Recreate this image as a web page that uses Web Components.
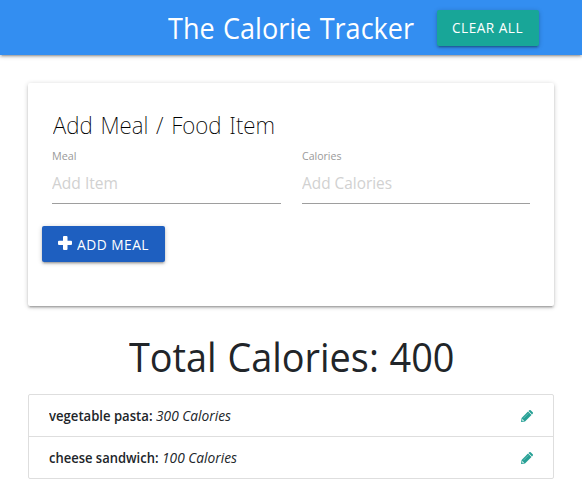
<!DOCTYPE html>
<html lang="en"><head><meta charset="utf-8"><title>The Calorie Tracker</title>
<style>
html,body{margin:0;height:100%;background:#fff;overflow:hidden}
body{font-family:"Open Sans","Noto Sans",sans-serif;color:#212529}
</style></head><body>
<calorie-app></calorie-app>
<script>
// Text line whose run is condensed or widened to occupy a set width.
class FitText extends HTMLElement{
  connectedCallback(){
    const r=this.attachShadow({mode:'open'});
    r.innerHTML='<style>:host{display:block;flex:none;white-space:nowrap}span{display:inline-block;transform-origin:0 50%}</style><span><slot></slot></span>';
    const w=+this.getAttribute('width'),s=r.querySelector('span');
    this.style.width=w+'px';
    s.style.transform='scaleX('+(w/s.getBoundingClientRect().width)+')';
  }
}
class AppButton extends HTMLElement{
  connectedCallback(){
    this.attachShadow({mode:'open'}).innerHTML=`<style>
    :host{display:block;flex:none}
    button{display:flex;align-items:center;gap:5px;width:100%;height:36px;box-sizing:border-box;padding:var(--btn-pad,0 0 0 15.500px);border:0;border-radius:2px;background:var(--btn,#18a698);color:#fff;font:14px/34px "Open Sans",sans-serif;letter-spacing:.5px;box-shadow:0 2px 2px 0 rgba(0,0,0,.14),0 3px 1px -2px rgba(0,0,0,.12),0 1px 5px 0 rgba(0,0,0,.2)}
    </style><button><slot></slot></button>`;
  }
}
class PlusIcon extends HTMLElement{
  connectedCallback(){
    this.attachShadow({mode:'open'}).innerHTML=`<style>:host{display:block;width:14px;height:14px;margin-bottom:4px}svg{display:block}</style>
    <svg width="14" height="14" viewBox="0 0 14 14"><path fill="#fff" d="M6 0h2.500q1 0 1 1v3.700h3.500q1 0 1 1V8q0 1-1 1H9.500v4q0 1-1 1H6q-1 0-1-1V9H1Q0 9 0 8V5.700q0-1 1-1h4V1q0-1 1-1z"/></svg>`;
  }
}
class PencilIcon extends HTMLElement{
  connectedCallback(){
    this.attachShadow({mode:'open'}).innerHTML=`<style>:host{display:block;width:12px;height:12px}svg{display:block}</style>
    <svg width="12" height="12" viewBox="0 0 12 12"><path fill="#26a095" d="M.6 8 7 1.500l3.500 3.500L4 11.400 0 12z"/><path fill="#26a095" d="M7.500 1 8.300.3q.7-.6 1.400 0l2 2q.6.7 0 1.400l-.7.8z"/><path stroke="#7fcac3" stroke-width=".7" d="M2.400 8.300 7.400 3.300"/><path fill="#d5eeeb" d="M1.200 9.200h.9v.9h.8v.7l-1.100.3-.9-.9z"/></svg>`;
  }
}
class NavBar extends HTMLElement{
  connectedCallback(){
    this.attachShadow({mode:'open'}).innerHTML=`<style>
    :host{display:flex;height:55px;box-sizing:border-box;padding:0 43px 0 168px;justify-content:space-between;align-items:flex-start;background:#338ef1;color:#fff;box-shadow:0 2px 2px 0 rgba(0,0,0,.14),0 3px 1px -2px rgba(0,0,0,.12),0 1px 5px 0 rgba(0,0,0,.2)}
    .title{font-size:28.500px;line-height:56px;word-spacing:1.500px}app-button{width:102px;margin-top:10px;--btn-pad:0 0 1px 15px}
    </style><fit-text class="title" width="246">The Calorie Tracker</fit-text><app-button><fit-text width="71">CLEAR ALL</fit-text></app-button>`;
  }
}
class InputField extends HTMLElement{
  connectedCallback(){
    this.attachShadow({mode:'open'}).innerHTML=`<style>
    :host{display:block;height:55px;box-sizing:border-box;border-bottom:1px solid #9e9e9e}
    .label{font-size:11px;line-height:14px;color:#9a9a9a}.hint{font-size:15.700px;line-height:22px;margin-top:9px;color:#d1d1d1}
    </style><fit-text class="label" width="${this.getAttribute('lw')}">${this.getAttribute('label')}</fit-text><fit-text class="hint" width="${this.getAttribute('hw')}">${this.getAttribute('hint')}</fit-text>`;
  }
}
class MealCard extends HTMLElement{
  connectedCallback(){
    this.attachShadow({mode:'open'}).innerHTML=`<style>
    :host{display:block;height:223px;box-sizing:border-box;padding:26px 24px 0;border-radius:2px;background:#fff;box-shadow:0 2px 2px 0 rgba(0,0,0,.14),0 3px 1px -2px rgba(0,0,0,.12),0 1px 5px 0 rgba(0,0,0,.2)}
    .title{font:200 24px/32px "Noto Sans","Open Sans",sans-serif;color:#000;word-spacing:2px;margin-left:.5px}
    .fields{display:grid;grid-template-columns:229px 228px;gap:21px;margin-top:8px}
    app-button{width:123px;margin:22px 0 0 -10px;--btn:#1e5fc0;--btn-pad:2px 0 0 15.500px}
    </style><fit-text class="title" width="222">Add Meal / Food Item</fit-text>
    <div class="fields"><input-field label="Meal" lw="24.500" hint="Add Item" hw="66"></input-field><input-field label="Calories" lw="39.500" hint="Add Calories" hw="90"></input-field></div>
    <app-button><plus-icon></plus-icon><fit-text width="72">ADD MEAL</fit-text></app-button>`;
  }
}
class MealRow extends HTMLElement{
  connectedCallback(){
    this.attachShadow({mode:'open'}).innerHTML=`<style>
    :host{display:flex;align-items:center;height:41px;padding:0 20px 0 20px;font-size:13.600px;line-height:20px;color:#212529}
    .name{font-weight:600;margin-right:3.500px}.amount{font-style:italic}
    pencil-icon{margin:1px 0 0 auto}
    </style><fit-text class="name" width="${this.getAttribute('nw')}">${this.getAttribute('name')}:</fit-text><fit-text class="amount" width="75">${this.getAttribute('amount')} Calories</fit-text><pencil-icon></pencil-icon>`;
  }
}
class MealList extends HTMLElement{
  connectedCallback(){
    this.attachShadow({mode:'open'}).innerHTML=`<style>
    :host{display:block;border:1px solid #dedede;border-radius:2px}::slotted(meal-row:not(:first-child)){border-top:1px solid #dedede}
    </style><slot></slot>`;
  }
}
class CalorieApp extends HTMLElement{
  connectedCallback(){
    this.attachShadow({mode:'open'}).innerHTML=`<style>
    :host{display:block}main{display:flex;flex-direction:column;padding:28px 28px 0}
    .total{font-size:39.500px;line-height:52px;align-self:center;margin:25px 0 11px 1px;word-spacing:1px}
    </style><nav-bar></nav-bar><main><meal-card></meal-card>
    <fit-text class="total" width="325.500">Total Calories: 400</fit-text>
    <meal-list><meal-row name="vegetable pasta" nw="103.500" amount="300"></meal-row><meal-row name="cheese sandwich" nw="109.500" amount="100"></meal-row></meal-list></main>`;
  }
}
customElements.define('fit-text',FitText);
customElements.define('app-button',AppButton);
customElements.define('plus-icon',PlusIcon);
customElements.define('pencil-icon',PencilIcon);
customElements.define('nav-bar',NavBar);
customElements.define('input-field',InputField);
customElements.define('meal-card',MealCard);
customElements.define('meal-row',MealRow);
customElements.define('meal-list',MealList);
customElements.define('calorie-app',CalorieApp);
</script></body></html>
